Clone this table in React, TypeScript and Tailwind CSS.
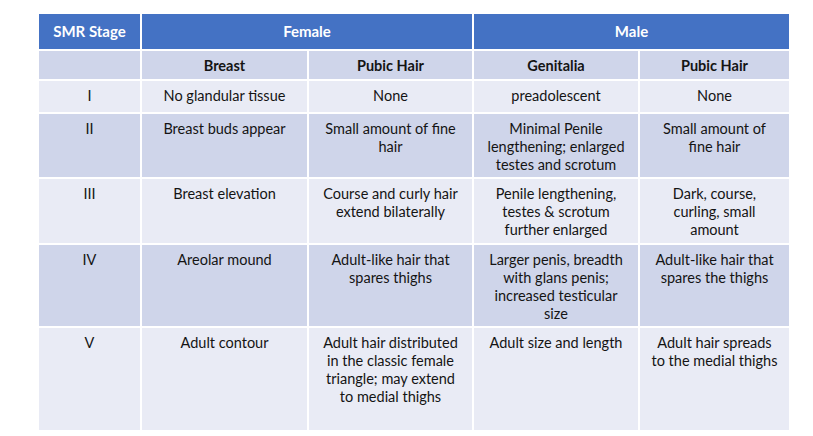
import React from 'react';

type Row = {
  stage: string;
  breast: string[];
  femaleHair: string[];
  genitalia: string[];
  maleHair: string[];
  band: 'dark' | 'light';
};

// each string in the arrays is one line, as wrapped in the slide
const rows: Row[] = [
  {
    stage: 'I',
    breast: ['No glandular tissue'],
    femaleHair: ['None'],
    genitalia: ['preadolescent'],
    maleHair: ['None'],
    band: 'light',
  },
  {
    stage: 'II',
    breast: ['Breast buds appear'],
    femaleHair: ['Small amount of fine', 'hair'],
    genitalia: ['Minimal Penile', 'lengthening; enlarged', 'testes and scrotum'],
    maleHair: ['Small amount of', 'fine hair'],
    band: 'dark',
  },
  {
    stage: 'III',
    breast: ['Breast elevation'],
    femaleHair: ['Course and curly hair', 'extend bilaterally'],
    genitalia: ['Penile lengthening,', 'testes & scrotum', 'further enlarged'],
    maleHair: ['Dark, course,', 'curling, small', 'amount'],
    band: 'light',
  },
  {
    stage: 'IV',
    breast: ['Areolar mound'],
    femaleHair: ['Adult-like hair that', 'spares thighs'],
    genitalia: ['Larger penis, breadth', 'with glans penis;', 'increased testicular', 'size'],
    maleHair: ['Adult-like hair that', 'spares the thighs'],
    band: 'dark',
  },
  {
    stage: 'V',
    breast: ['Adult contour'],
    femaleHair: ['Adult hair distributed', 'in the classic female', 'triangle; may extend', 'to medial thighs'],
    genitalia: ['Adult size and length'],
    maleHair: ['Adult hair spreads', 'to the medial thighs'],
    band: 'light',
  },
];

const Lines: React.FC<{ lines: string[] }> = ({ lines }) => (
  <>
    {lines.map((l, i) => (
      <div key={i} className="whitespace-nowrap">
        {l}
      </div>
    ))}
  </>
);

const Cell: React.FC<{ band: 'dark' | 'light'; children: React.ReactNode }> = ({ band, children }) => (
  <div
    className={
      band === 'dark'
        ? 'bg-[#cfd5ea] pt-[6px] text-center text-[14.5px] leading-[18px] text-[#141414]'
        : 'bg-[#e9ebf5] pt-[6px] text-center text-[14.5px] leading-[18px] text-[#141414]'
    }
  >
    {children}
  </div>
);

export default function App() {
  return (
    <div
      className="w-[813px] h-[436px] bg-white pt-[14px] pl-[39px]"
      style={{ fontFamily: 'Lato, "Open Sans", sans-serif' }}
    >
      <div className="grid w-[750px] grid-cols-[101px_165px_163px_164px_149px] grid-rows-[35px_28px_31px_63px_64px_81px_102px] gap-[2px]">
        {/* Title row */}
        <div className="flex items-center justify-center bg-[#4472c4] text-[15px] font-bold text-white">
          SMR Stage
        </div>
        <div className="col-span-2 flex items-center justify-center bg-[#4472c4] text-[15px] font-bold text-white">
          Female
        </div>
        <div className="col-span-2 flex items-center justify-center bg-[#4472c4] text-[15px] font-bold text-white">
          Male
        </div>

        {/* Sub header */}
        <div className="bg-[#cfd5ea]" />
        <div className="flex items-center justify-center bg-[#cfd5ea] pt-px text-[14.5px] font-bold text-[#141414]">Breast</div>
        <div className="flex items-center justify-center bg-[#cfd5ea] pt-px text-[14.5px] font-bold text-[#141414]">Pubic Hair</div>
        <div className="flex items-center justify-center bg-[#cfd5ea] pt-px text-[14.5px] font-bold text-[#141414]">Genitalia</div>
        <div className="flex items-center justify-center bg-[#cfd5ea] pt-px text-[14.5px] font-bold text-[#141414]">Pubic Hair</div>

        {rows.map((r) => (
          <React.Fragment key={r.stage}>
            <Cell band={r.band}>{r.stage}</Cell>
            <Cell band={r.band}>
              <Lines lines={r.breast} />
            </Cell>
            <Cell band={r.band}>
              <Lines lines={r.femaleHair} />
            </Cell>
            <Cell band={r.band}>
              <Lines lines={r.genitalia} />
            </Cell>
            <Cell band={r.band}>
              <Lines lines={r.maleHair} />
            </Cell>
          </React.Fragment>
        ))}
      </div>
    </div>
  );
}
